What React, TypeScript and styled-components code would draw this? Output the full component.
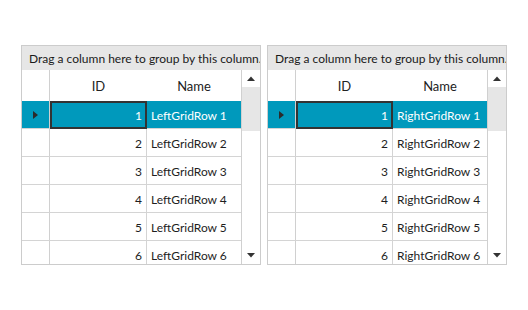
import { createGlobalStyle } from "styled-components";
import styled from "styled-components";

const GlobalStyle = createGlobalStyle`
  html, body {
    margin: 0;
    padding: 0;
    background: #ffffff;
  }
  body {
    font-family: Lato, "Open Sans", sans-serif;
    color: #1e1e1e;
  }
`;

const Page = styled.div`
  display: flex;
  gap: 6px;
  padding: 45px 0 0 21px;
`;

const Grid = styled.div`
  box-sizing: border-box;
  width: 240px;
  height: 220px;
  border: 1px solid #cccccc;
  display: flex;
  flex-direction: column;
  overflow: hidden;
`;

const GroupPanel = styled.div`
  height: 24px;
  flex: none;
  background: #e6e6e6;
  font-size: 12px;
  line-height: 25px;
  padding-left: 7px;
  white-space: nowrap;
  color: #1a1a1a;
`;

const Body = styled.div`
  flex: 1;
  display: flex;
  min-height: 0;
`;

const Table = styled.div`
  flex: 1;
  display: flex;
  flex-direction: column;
`;

const HeaderRow = styled.div`
  height: 31px;
  flex: none;
  display: grid;
  grid-template-columns: 28px 97px 1fr;
  font-size: 13px;
  line-height: 33px;
  color: #222;
`;

const HeaderCell = styled.div<{ $indicator?: boolean }>`
  text-align: center;
  border-right: ${(p) => (p.$indicator ? "1px solid #d0d0d0" : "none")};
`;

const Row = styled.div<{ $selected?: boolean }>`
  box-sizing: border-box;
  height: 28px;
  flex: none;
  display: grid;
  grid-template-columns: 28px 97px 1fr;
  border-bottom: 1px solid #d4d4d4;
  background: ${(p) => (p.$selected ? "#0099bc" : "#ffffff")};
  color: ${(p) => (p.$selected ? "#ffffff" : "#1e1e1e")};
  font-size: 12px;
`;

const IndicatorCell = styled.div`
  border-right: 1px solid #d0d0d0;
  display: flex;
  align-items: center;
  padding-left: 11px;
`;

const IdCell = styled.div<{ $current?: boolean }>`
  box-sizing: border-box;
  display: flex;
  align-items: center;
  justify-content: flex-end;
  padding: 2px 4px 0 0;
  border-right: 1px solid #d4d4d4;
  ${(p) => (p.$current ? "border: 2px solid #333333; padding: 1px 3px 0 0; margin-bottom: -1px;" : "")}
`;

const NameCell = styled.div`
  display: flex;
  align-items: center;
  padding: 2px 0 0 4px;
  white-space: nowrap;
`;

const ScrollBar = styled.div`
  width: 19px;
  flex: none;
  box-sizing: border-box;
  border-left: 1px solid #d0d0d0;
  display: flex;
  flex-direction: column;
`;

const ArrowButton = styled.div`
  height: 17px;
  flex: none;
  display: flex;
  align-items: center;
  justify-content: center;
`;

const Thumb = styled.div`
  height: 44px;
  flex: none;
  background: #e6e6e6;
`;

const Track = styled.div`
  flex: 1;
`;

const Triangle = ({ dir }: { dir: "up" | "down" | "right" }) => {
  if (dir === "right")
    return (
      <svg width="5" height="8" viewBox="0 0 5 8">
        <path d="M0 0 L5 4 L0 8 Z" fill="#2b2b2b" />
      </svg>
    );
  return (
    <svg width="8" height="5" viewBox="0 0 8 5">
      <path d={dir === "up" ? "M0 5 L4 0.5 L8 5 Z" : "M0 0 L8 0 L4 4.5 Z"} fill="#333333" />
    </svg>
  );
};

const DataGrid = ({ prefix }: { prefix: string }) => {
  const rows = [1, 2, 3, 4, 5, 6];
  return (
    <Grid>
      <GroupPanel>Drag a column here to group by this column.</GroupPanel>
      <Body>
        <Table>
          <HeaderRow>
            <HeaderCell $indicator />
            <HeaderCell>ID</HeaderCell>
            <HeaderCell>Name</HeaderCell>
          </HeaderRow>
          {rows.map((id) => (
            <Row key={id} $selected={id === 1}>
              <IndicatorCell>{id === 1 && <Triangle dir="right" />}</IndicatorCell>
              <IdCell $current={id === 1}>{id}</IdCell>
              <NameCell>
                {prefix}
                {id}
              </NameCell>
            </Row>
          ))}
        </Table>
        <ScrollBar>
          <ArrowButton>
            <Triangle dir="up" />
          </ArrowButton>
          <Thumb />
          <Track />
          <ArrowButton>
            <Triangle dir="down" />
          </ArrowButton>
        </ScrollBar>
      </Body>
    </Grid>
  );
};

const App = () => (
  <>
    <GlobalStyle />
    <Page>
      <DataGrid prefix="LeftGridRow " />
      <DataGrid prefix="RightGridRow " />
    </Page>
  </>
);

export default App;
